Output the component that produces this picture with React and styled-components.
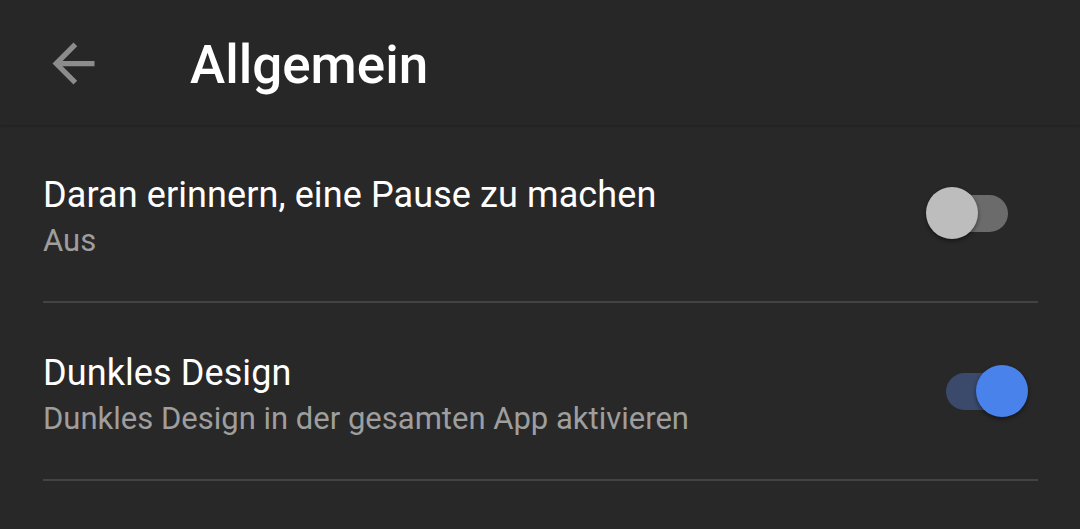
import React from 'react';
import styled, { createGlobalStyle } from 'styled-components';

const Global = createGlobalStyle`
  html, body {
    margin: 0;
    padding: 0;
    background: #282828;
  }
  body {
    font-family: Roboto, "Noto Sans", sans-serif;
    -webkit-font-smoothing: antialiased;
  }
`;

const Page = styled.div`
  width: 1080px;
  height: 529px;
  background: #282828;
  overflow: hidden;
`;

const Header = styled.div`
  height: 125px;
  display: flex;
  align-items: center;
  background: #272727;
  box-shadow: 0 1px 3px rgba(0, 0, 0, 0.25);
  position: relative;
  z-index: 1;
`;

const BackButton = styled.div`
  width: 190px;
  height: 100%;
  display: flex;
  align-items: center;
  padding-left: 42px;
  padding-top: 2px;
  box-sizing: border-box;
`;

const Title = styled.h1`
  margin: 0;
  font-size: 53px;
  font-weight: 500;
  color: #ffffff;
  letter-spacing: 0;
  padding-top: 5px;
`;

const List = styled.div`
  padding: 0 42px 0 43px;
`;

const Row = styled.div`
  height: 178px;
  display: flex;
  align-items: center;
  justify-content: space-between;
  border-bottom: 2px solid #434343;
  box-sizing: border-box;
  padding-top: 7px;
`;

const Texts = styled.div`
  display: flex;
  flex-direction: column;
  gap: 8px;
`;

const Label = styled.div`
  font-size: 36px;
  color: #ffffff;
  line-height: 40px;
  letter-spacing: 0.1px;
`;

const Sub = styled.div`
  font-size: 31px;
  color: #9e9e9e;
  line-height: 36px;
`;

const SwitchBox = styled.div`
  position: relative;
  width: 104px;
  height: 52px;
  margin-right: 8px;
  margin-bottom: 7px;
`;

const Track = styled.div`
  position: absolute;
  left: 20px;
  top: 8px;
  width: 62px;
  height: 37px;
  border-radius: 19px;
  background: ${p => (p.on ? '#3b4a6b' : '#6b6b6b')};
`;

const Thumb = styled.div`
  position: absolute;
  top: 0;
  left: ${p => (p.on ? '50px' : '0px')};
  width: 52px;
  height: 52px;
  border-radius: 50%;
  background: ${p => (p.on ? '#4a82ec' : '#bdbdbd')};
  box-shadow: 0 2px 4px rgba(0, 0, 0, 0.45);
`;

const Switch = ({ on }) => (
  <SwitchBox>
    <Track on={on ? 1 : 0} />
    <Thumb on={on ? 1 : 0} />
  </SwitchBox>
);

const BackArrow = () => (
  <svg width="63" height="63" viewBox="0 0 24 24">
    <path
      d="M20 11H7.83l5.59-5.59L12 4l-8 8 8 8 1.41-1.41L7.83 13H20v-2z"
      fill="#8c8c8c"
    />
  </svg>
);

const App = () => (
  <Page>
    <Global />
    <Header>
      <BackButton>
        <BackArrow />
      </BackButton>
      <Title>Allgemein</Title>
    </Header>
    <List>
      <Row>
        <Texts>
          <Label>Daran erinnern, eine Pause zu machen</Label>
          <Sub>Aus</Sub>
        </Texts>
        <Switch on={false} />
      </Row>
      <Row>
        <Texts>
          <Label>Dunkles Design</Label>
          <Sub>Dunkles Design in der gesamten App aktivieren</Sub>
        </Texts>
        <Switch on={true} />
      </Row>
    </List>
  </Page>
);

export default App;
